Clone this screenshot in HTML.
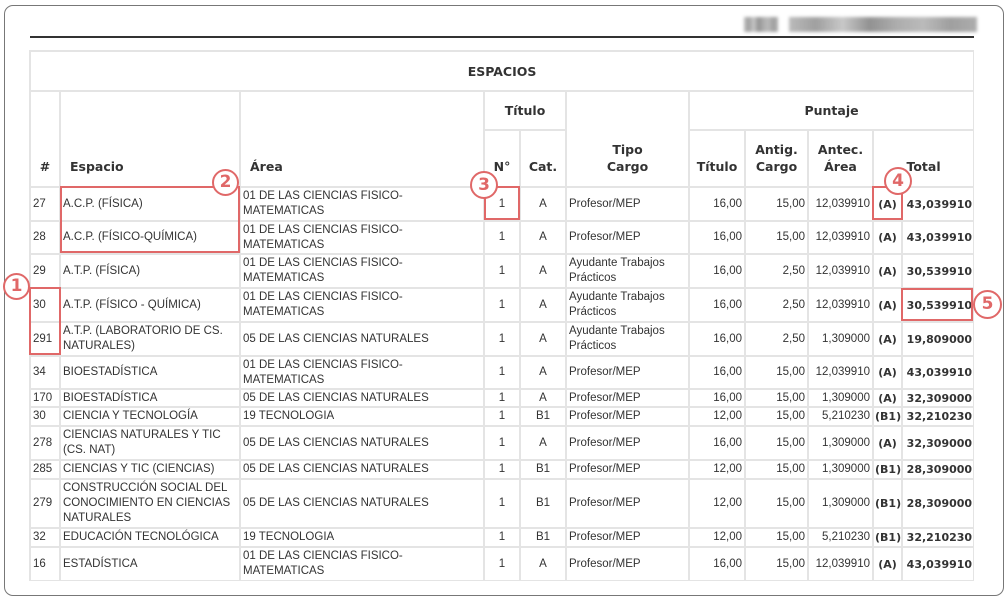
<!DOCTYPE html>
<html><head><meta charset="utf-8">
<style>
*{margin:0;padding:0;box-sizing:border-box}
html,body{width:1008px;height:601px;background:#fff;overflow:hidden;font-family:"Liberation Sans",Arial,sans-serif;color:#333}
.frame{position:absolute;left:4px;top:5px;width:1000px;height:591px;border:1.5px solid #777;border-radius:9px}
.rule{position:absolute;left:30px;top:36px;width:944px;height:2px;background:#333}
.blur{position:absolute;top:17px;height:15px;background:linear-gradient(90deg,#aaa,#888,#bbb,#777,#999,#aaa,#888,#999);filter:blur(1.5px);opacity:.8}
.clip{position:absolute;left:29px;top:50px;width:945px;height:531px;overflow:hidden}
table{border-collapse:collapse;table-layout:fixed;width:944px;font-size:11.5px;line-height:15px}
td,th{border:2px solid #e4e4e4;padding:0 2px;vertical-align:middle;overflow:hidden}
th{font-weight:bold;font-size:12.5px;line-height:17px;color:#333;font-family:"DejaVu Sans",sans-serif}
.c{text-align:center}.r{text-align:right}.b{font-weight:bold;font-family:"DejaVu Sans",sans-serif;font-size:11px;padding:0 1px;white-space:nowrap}
.box{position:absolute;border:2px solid #e06868}
.circ{position:absolute;border:2px solid #e06868;border-radius:50%;background:#fff;color:#e06868;font-weight:bold;font-size:17px;text-align:center;font-family:"DejaVu Sans",sans-serif}
</style></head><body>
<div class="frame"></div>
<div class="blur" style="left:744px;width:34px"></div>
<div class="blur" style="left:789px;width:188px"></div>
<div class="rule"></div>
<div class="clip">
<table>
<colgroup><col style="width:30px"><col style="width:180px"><col style="width:244px"><col style="width:36px"><col style="width:46px"><col style="width:123px"><col style="width:56px"><col style="width:63px"><col style="width:65px"><col style="width:29px"><col style="width:72px"></colgroup>
<tr style="height:40px"><th colspan="11" class="c">ESPACIOS</th></tr>
<tr style="height:39px"><th rowspan="2" style="vertical-align:bottom;padding-bottom:11px">#</th><th rowspan="2" style="text-align:left;vertical-align:bottom;padding:0 0 11px 9px">Espacio</th><th rowspan="2" style="text-align:left;vertical-align:bottom;padding:0 0 11px 9px">Área</th><th colspan="2">Título</th><th rowspan="2" style="vertical-align:bottom;padding-bottom:11px">Tipo<br>Cargo</th><th colspan="5">Puntaje</th></tr>
<tr style="height:57px"><th style="vertical-align:bottom;padding-bottom:11px">N°</th><th style="vertical-align:bottom;padding-bottom:11px">Cat.</th><th style="vertical-align:bottom;padding-bottom:11px">Título</th><th style="vertical-align:bottom;padding-bottom:11px">Antig.<br>Cargo</th><th style="vertical-align:bottom;padding-bottom:11px">Antec.<br>Área</th><th colspan="2" style="vertical-align:bottom;padding-bottom:11px">Total</th></tr>
<tr style="height:34px"><td>27</td><td>A.C.P. (FÍSICA)</td><td>01 DE LAS CIENCIAS FISICO-<br>MATEMATICAS</td><td class="c">1</td><td class="c">A</td><td>Profesor/MEP</td><td class="r">16,00</td><td class="r">15,00</td><td class="r">12,039910</td><td class="c b">(A)</td><td class="r b">43,039910</td></tr>
<tr style="height:33px"><td>28</td><td>A.C.P. (FÍSICO-QUÍMICA)</td><td>01 DE LAS CIENCIAS FISICO-<br>MATEMATICAS</td><td class="c">1</td><td class="c">A</td><td>Profesor/MEP</td><td class="r">16,00</td><td class="r">15,00</td><td class="r">12,039910</td><td class="c b">(A)</td><td class="r b">43,039910</td></tr>
<tr style="height:34px"><td>29</td><td>A.T.P. (FÍSICA)</td><td>01 DE LAS CIENCIAS FISICO-<br>MATEMATICAS</td><td class="c">1</td><td class="c">A</td><td>Ayudante Trabajos<br>Prácticos</td><td class="r">16,00</td><td class="r">2,50</td><td class="r">12,039910</td><td class="c b">(A)</td><td class="r b">30,539910</td></tr>
<tr style="height:34px"><td>30</td><td>A.T.P. (FÍSICO - QUÍMICA)</td><td>01 DE LAS CIENCIAS FISICO-<br>MATEMATICAS</td><td class="c">1</td><td class="c">A</td><td>Ayudante Trabajos<br>Prácticos</td><td class="r">16,00</td><td class="r">2,50</td><td class="r">12,039910</td><td class="c b">(A)</td><td class="r b">30,539910</td></tr>
<tr style="height:34px"><td>291</td><td>A.T.P. (LABORATORIO DE CS.<br>NATURALES)</td><td>05 DE LAS CIENCIAS NATURALES</td><td class="c">1</td><td class="c">A</td><td>Ayudante Trabajos<br>Prácticos</td><td class="r">16,00</td><td class="r">2,50</td><td class="r">1,309000</td><td class="c b">(A)</td><td class="r b">19,809000</td></tr>
<tr style="height:33px"><td>34</td><td>BIOESTADÍSTICA</td><td>01 DE LAS CIENCIAS FISICO-<br>MATEMATICAS</td><td class="c">1</td><td class="c">A</td><td>Profesor/MEP</td><td class="r">16,00</td><td class="r">15,00</td><td class="r">12,039910</td><td class="c b">(A)</td><td class="r b">43,039910</td></tr>
<tr style="height:18px"><td>170</td><td>BIOESTADÍSTICA</td><td>05 DE LAS CIENCIAS NATURALES</td><td class="c">1</td><td class="c">A</td><td>Profesor/MEP</td><td class="r">16,00</td><td class="r">15,00</td><td class="r">1,309000</td><td class="c b">(A)</td><td class="r b">32,309000</td></tr>
<tr style="height:19px"><td>30</td><td>CIENCIA Y TECNOLOGÍA</td><td>19 TECNOLOGIA</td><td class="c">1</td><td class="c">B1</td><td>Profesor/MEP</td><td class="r">12,00</td><td class="r">15,00</td><td class="r">5,210230</td><td class="c b">(B1)</td><td class="r b">32,210230</td></tr>
<tr style="height:34px"><td>278</td><td>CIENCIAS NATURALES Y TIC<br>(CS. NAT)</td><td>05 DE LAS CIENCIAS NATURALES</td><td class="c">1</td><td class="c">A</td><td>Profesor/MEP</td><td class="r">16,00</td><td class="r">15,00</td><td class="r">1,309000</td><td class="c b">(A)</td><td class="r b">32,309000</td></tr>
<tr style="height:19px"><td>285</td><td>CIENCIAS Y TIC (CIENCIAS)</td><td>05 DE LAS CIENCIAS NATURALES</td><td class="c">1</td><td class="c">B1</td><td>Profesor/MEP</td><td class="r">12,00</td><td class="r">15,00</td><td class="r">1,309000</td><td class="c b">(B1)</td><td class="r b">28,309000</td></tr>
<tr style="height:49px"><td>279</td><td>CONSTRUCCIÓN SOCIAL DEL<br>CONOCIMIENTO EN CIENCIAS<br>NATURALES</td><td>05 DE LAS CIENCIAS NATURALES</td><td class="c">1</td><td class="c">B1</td><td>Profesor/MEP</td><td class="r">12,00</td><td class="r">15,00</td><td class="r">1,309000</td><td class="c b">(B1)</td><td class="r b">28,309000</td></tr>
<tr style="height:19px"><td>32</td><td>EDUCACIÓN TECNOLÓGICA</td><td>19 TECNOLOGIA</td><td class="c">1</td><td class="c">B1</td><td>Profesor/MEP</td><td class="r">12,00</td><td class="r">15,00</td><td class="r">5,210230</td><td class="c b">(B1)</td><td class="r b">32,210230</td></tr>
<tr style="height:34px"><td>16</td><td>ESTADÍSTICA</td><td>01 DE LAS CIENCIAS FISICO-<br>MATEMATICAS</td><td class="c">1</td><td class="c">A</td><td>Profesor/MEP</td><td class="r">16,00</td><td class="r">15,00</td><td class="r">12,039910</td><td class="c b">(A)</td><td class="r b">43,039910</td></tr>
<tr style="height:34px"><td></td><td></td><td></td><td></td><td></td><td></td><td></td><td></td><td></td><td></td><td></td></tr>
</table>
</div>
<div class="box" style="left:29px;top:287px;width:32px;height:68px"></div>
<div class="box" style="left:60px;top:186px;width:180px;height:67px"></div>
<div class="box" style="left:484px;top:186px;width:36px;height:34px"></div>
<div class="box" style="left:872px;top:186px;width:31px;height:34px"></div>
<div class="box" style="left:901px;top:288px;width:72px;height:33px"></div>
<div class="circ" style="left:3px;top:273px;width:27px;height:27px;line-height:23px">1</div>
<div class="circ" style="left:212px;top:169px;width:27px;height:27px;line-height:23px">2</div>
<div class="circ" style="left:470px;top:171px;width:28px;height:28px;line-height:24px">3</div>
<div class="circ" style="left:884px;top:167px;width:28px;height:28px;line-height:24px">4</div>
<div class="circ" style="left:973px;top:290px;width:29px;height:29px;line-height:25px">5</div>
</body></html>
